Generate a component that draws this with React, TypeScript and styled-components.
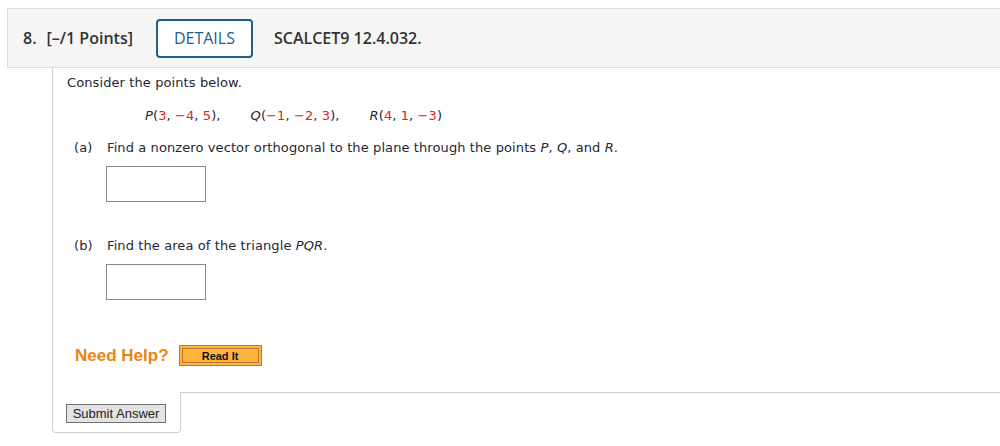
import React from "react";
import styled, { createGlobalStyle } from "styled-components";

const Global = createGlobalStyle`
  html, body { margin: 0; padding: 0; background: #fff; }
  body { font-family: "DejaVu Sans", Verdana, sans-serif; }
`;

const Page = styled.div`
  width: 1000px;
  height: 446px;
  overflow: hidden;
  padding-top: 8px;
  box-sizing: border-box;
`;

const Header = styled.div`
  margin-left: 7px;
  height: 58px;
  background: #f5f5f5;
  border: 1px solid #dcdcdc;
  border-right: none;
  display: flex;
  align-items: center;
  padding-left: 15px;
  font-family: "Open Sans", sans-serif;
  font-weight: 600;
  font-size: 16px;
  color: #333;
`;

const Num = styled.span`
  margin-right: 10px;
`;

const Points = styled.span`
  margin-right: 23px;
`;

const DetailsBtn = styled.div`
  box-sizing: border-box;
  width: 97px;
  height: 39px;
  border: 2px solid #1c5e8d;
  border-radius: 4px;
  background: #fff;
  color: #1c5e8d;
  font-weight: 400;
  display: flex;
  align-items: center;
  justify-content: center;
  margin-right: 21px;
`;

const Body = styled.div`
  margin-left: 52px;
  border-left: 1px solid #cfcfcf;
  padding: 7px 0 0 14px;
  height: 324px;
  box-sizing: border-box;
  font-size: 13px;
  letter-spacing: 0.1px;
  color: #262633;
  line-height: 16px;
`;

const Para = styled.div`
  margin: 0;
`;

const PointsRow = styled.div`
  display: flex;
  gap: 30px;
  margin-top: 17px;
  margin-left: 78px;
`;

const Var = styled.i`
  font-style: italic;
`;

const Red = styled.span`
  color: #e0201a;
`;

const PartRow = styled.div<{ $mt: number }>`
  display: flex;
  margin-top: ${(p) => p.$mt}px;
  margin-left: 7px;
`;

const PartLabel = styled.span`
  width: 33px;
`;

const AnswerBox = styled.div<{ $mt: number }>`
  box-sizing: border-box;
  width: 100px;
  height: 36px;
  border: 1px solid #8a8a8a;
  margin-left: 39px;
  margin-top: ${(p) => p.$mt}px;
`;

const HelpRow = styled.div`
  display: flex;
  align-items: center;
  margin-top: 45px;
  margin-left: 8px;
`;

const NeedHelp = styled.span`
  font-family: "Liberation Sans", Arial, sans-serif;
  font-weight: 700;
  font-size: 17px;
  letter-spacing: 0;
  color: #ea8410;
  margin-right: 10px;
`;

const ReadIt = styled.div`
  box-sizing: border-box;
  width: 83px;
  height: 21px;
  background: #ffb43e;
  border: 1px solid #c0782a;
  box-shadow: inset 0 0 0 2px #ffb43e, inset 0 0 0 3px #c0782a;
  font-family: "Liberation Sans", Arial, sans-serif;
  font-weight: 700;
  font-size: 11px;
  letter-spacing: 0;
  color: #111;
  display: flex;
  align-items: center;
  justify-content: center;
`;

const Footer = styled.div`
  display: flex;
  margin-left: 52px;
`;

const SubmitTab = styled.div`
  box-sizing: border-box;
  width: 129px;
  height: 41px;
  border: 1px solid #cfcfcf;
  border-top: none;
  border-radius: 0 0 4px 4px;
  padding: 12px 0 0 13px;
`;

const Filler = styled.div`
  flex: 1;
  border-top: 1px solid #cfcfcf;
  margin-left: -1px;
`;

const SubmitBtn = styled.div`
  box-sizing: border-box;
  width: 100px;
  height: 19px;
  background: #e3e3e3;
  border: 1px solid #707070;
  font-family: "Liberation Sans", Arial, sans-serif;
  font-size: 13px;
  color: #222;
  display: flex;
  align-items: center;
  justify-content: center;
`;

export default function App() {
  return (
    <Page>
      <Global />
      <Header>
        <Num>8.</Num>
        <Points>[–/1 Points]</Points>
        <DetailsBtn>DETAILS</DetailsBtn>
        <span>SCALCET9 12.4.032.</span>
      </Header>
      <Body>
        <Para>Consider the points below.</Para>
        <PointsRow>
          <span>
            <Var>P</Var>(<Red>3</Red>, <Red>−4</Red>, <Red>5</Red>),
          </span>
          <span>
            <Var>Q</Var>(<Red>−1</Red>, <Red>−2</Red>, <Red>3</Red>),
          </span>
          <span>
            <Var>R</Var>(<Red>4</Red>, <Red>1</Red>, <Red>−3</Red>)
          </span>
        </PointsRow>
        <PartRow $mt={16}>
          <PartLabel>(a)</PartLabel>
          <span>
            Find a nonzero vector orthogonal to the plane through the points <Var>P</Var>, <Var>Q</Var>, and <Var>R</Var>.
          </span>
        </PartRow>
        <AnswerBox $mt={10} />
        <PartRow $mt={36}>
          <PartLabel>(b)</PartLabel>
          <span>
            Find the area of the triangle <Var>PQR</Var>.
          </span>
        </PartRow>
        <AnswerBox $mt={10} />
        <HelpRow>
          <NeedHelp>Need Help?</NeedHelp>
          <ReadIt>Read It</ReadIt>
        </HelpRow>
      </Body>
      <Footer>
        <SubmitTab>
          <SubmitBtn>Submit Answer</SubmitBtn>
        </SubmitTab>
        <Filler />
      </Footer>
    </Page>
  );
}
